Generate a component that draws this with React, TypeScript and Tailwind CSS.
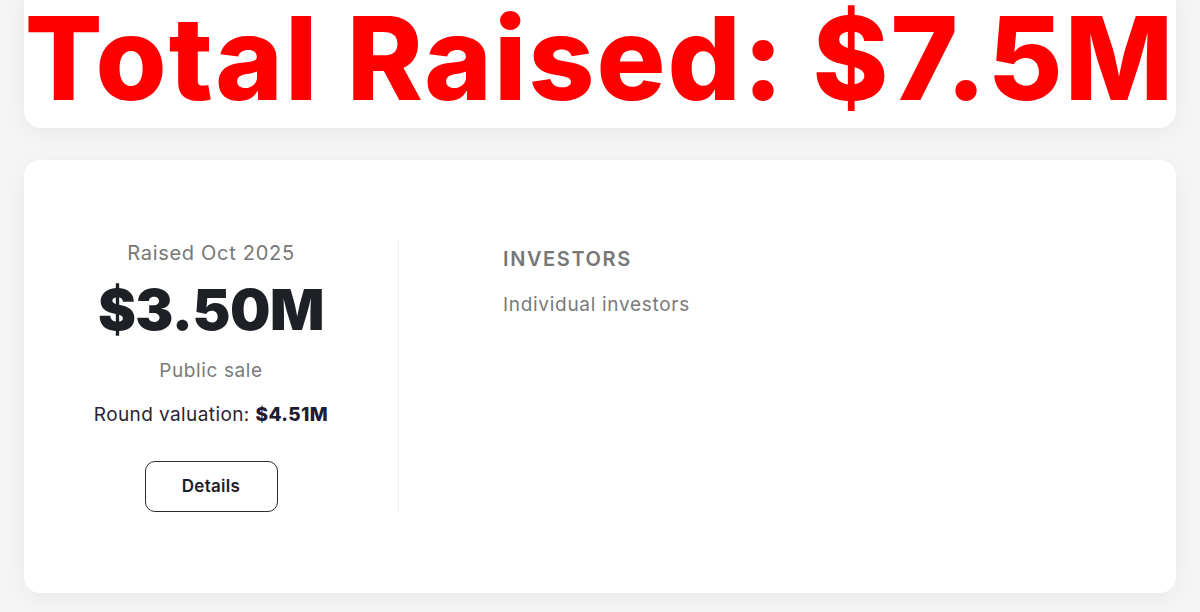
import React from 'react';

const sans = { fontFamily: 'Inter, "Noto Sans", sans-serif' };

export default function App() {
  return (
    <div className="min-h-[612px] w-[1200px] overflow-hidden bg-[#f5f5f5] px-[24px] pb-[20px]" style={sans}>
      {/* headline card */}
      <div className="-mt-[24px] flex h-[152px] items-end justify-center rounded-[18px] bg-white pb-[12px] shadow-[0_6px_24px_rgba(0,0,0,0.05)]">
        <h1 className="whitespace-nowrap text-[115px] font-extrabold leading-[1] tracking-[2px] text-[#ff0000]">
          Total Raised: $7.5M
        </h1>
      </div>

      {/* funding round card */}
      <div className="mt-[32px] flex rounded-[16px] bg-white py-[81px] shadow-[0_6px_24px_rgba(0,0,0,0.05)]">
        <div className="flex w-[375px] flex-col items-center border-r border-[#efefef]">
          <div className="text-[20px] leading-[24px] tracking-[0.7px] text-[#777777]">Raised Oct 2025</div>
          <div className="mt-[14px] text-[57px] font-black leading-[62px] tracking-[-0.5px] text-[#1d2025]">$3.50M</div>
          <div className="mt-[18px] text-[19px] leading-[24px] tracking-[0.6px] text-[#7a7a7a]">Public sale</div>
          <div className="mt-[20px] text-[19px] leading-[24px] tracking-[0.4px] text-[#2a2530]">
            Round valuation: <span className="font-extrabold text-[#231a33]">$4.51M</span>
          </div>
          <button className="mt-[34px] h-[51px] w-[133px] rounded-[10px] border border-[#2c2c2c] text-[17px] font-semibold tracking-[0.3px] text-[#1d2025]">
            Details
          </button>
        </div>
        <div className="pl-[104px] pt-[6px]">
          <div className="text-[20px] font-semibold leading-[24px] tracking-[1.6px] text-[#777777]">INVESTORS</div>
          <div className="mt-[22px] text-[19px] leading-[24px] tracking-[0.7px] text-[#7a7a7a]">Individual investors</div>
        </div>
      </div>
    </div>
  );
}
